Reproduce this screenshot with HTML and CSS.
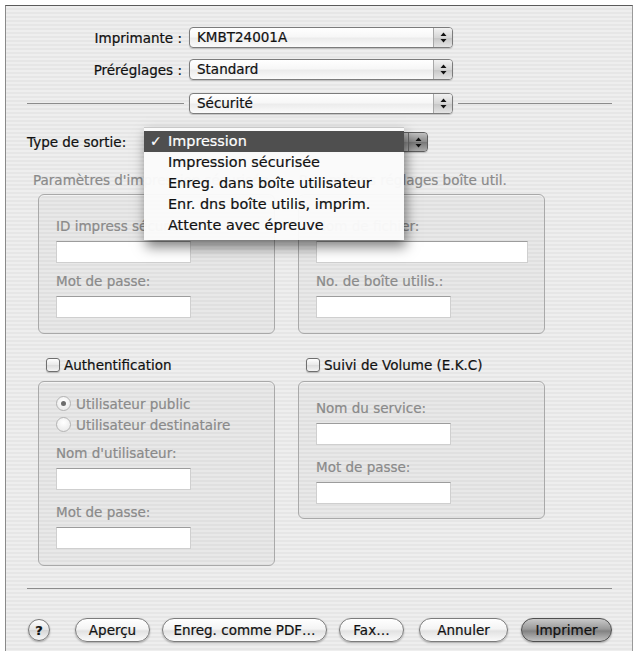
FILE: index.html
```html
<!DOCTYPE html>
<html lang="fr">
<head>
<meta charset="utf-8">
<title>Imprimer</title>
<link rel="stylesheet" href="styles.css">
</head>
<body>
<div class="window">
  <div class="form-row row-printer">
    <span class="row-label">Imprimante :</span>
    <div class="popup popup-main"><span class="popup-text">KMBT24001A</span><span class="popup-arrows"><svg width="7" height="11" viewBox="0 0 7 11"><path d="M3.5 0.5 L6.5 4 L0.5 4 Z M0.5 7 L6.5 7 L3.5 10.5 Z" fill="#111"/></svg></span></div>
  </div>
  <div class="form-row row-presets">
    <span class="row-label">Préréglages :</span>
    <div class="popup popup-main"><span class="popup-text">Standard</span><span class="popup-arrows"><svg width="7" height="11" viewBox="0 0 7 11"><path d="M3.5 0.5 L6.5 4 L0.5 4 Z M0.5 7 L6.5 7 L3.5 10.5 Z" fill="#111"/></svg></span></div>
  </div>
  <div class="pane-row">
    <span class="rule rule-left"></span>
    <div class="popup popup-main"><span class="popup-text">Sécurité</span><span class="popup-arrows"><svg width="7" height="11" viewBox="0 0 7 11"><path d="M3.5 0.5 L6.5 4 L0.5 4 Z M0.5 7 L6.5 7 L3.5 10.5 Z" fill="#111"/></svg></span></div>
    <span class="rule rule-right"></span>
  </div>

  <div class="type-row">
    <span class="type-label">Type de sortie:</span>
    <div class="popup popup-type"><span class="popup-text">Impression</span><span class="popup-arrows arrows-active"><svg width="7" height="11" viewBox="0 0 7 11"><path d="M3.5 0.5 L6.5 4 L0.5 4 Z M0.5 7 L6.5 7 L3.5 10.5 Z" fill="#111"/></svg></span></div>
    <ul class="menu">
      <li class="menu-item selected"><span class="check">✓</span>Impression</li>
      <li class="menu-item">Impression sécurisée</li>
      <li class="menu-item">Enreg. dans boîte utilisateur</li>
      <li class="menu-item">Enr. dns boîte utilis, imprim.</li>
      <li class="menu-item">Attente avec épreuve</li>
    </ul>
  </div>

  <div class="groups groups-top">
    <div class="group-col">
      <div class="group-title title-left">Paramètres d'impression sécurisée</div>
      <div class="group-box box-top">
        <div class="field-label first">ID impress sécurisée:</div>
        <div class="textfield tf-short"></div>
        <div class="field-label">Mot de passe:</div>
        <div class="textfield tf-short"></div>
      </div>
    </div>
    <div class="group-col">
      <div class="group-title title-right">Paramètres réglages boîte util.</div>
      <div class="group-box box-top">
        <div class="field-label first">Nom de fichier:</div>
        <div class="textfield tf-long"></div>
        <div class="field-label">No. de boîte utilis.:</div>
        <div class="textfield tf-short"></div>
      </div>
    </div>
  </div>

  <div class="groups groups-bottom">
    <div class="group-col">
      <label class="check-title"><span class="checkbox"></span>Authentification</label>
      <div class="group-box box-auth">
        <div class="radio-row"><span class="radio on"></span>Utilisateur public</div>
        <div class="radio-row"><span class="radio"></span>Utilisateur destinataire</div>
        <div class="field-label after-radio">Nom d'utilisateur:</div>
        <div class="textfield tf-short"></div>
        <div class="field-label">Mot de passe:</div>
        <div class="textfield tf-short"></div>
      </div>
    </div>
    <div class="group-col">
      <label class="check-title"><span class="checkbox"></span>Suivi de Volume (E.K.C)</label>
      <div class="group-box box-ekc">
        <div class="field-label first">Nom du service:</div>
        <div class="textfield tf-short"></div>
        <div class="field-label">Mot de passe:</div>
        <div class="textfield tf-short"></div>
      </div>
    </div>
  </div>

  <div class="separator"></div>

  <div class="button-row">
    <span class="help">?</span>
    <span class="btn btn-preview">Aperçu</span>
    <span class="btn btn-pdf">Enreg. comme PDF…</span>
    <span class="btn btn-fax">Fax…</span>
    <span class="btn btn-cancel">Annuler</span>
    <span class="btn btn-print">Imprimer</span>
  </div>
</div>
</body>
</html>
```
FILE: styles.css
```css
html, body {
  margin: 0;
  padding: 0;
  background: #ffffff;
}
body {
  font-family: "DejaVu Sans", "Liberation Sans", sans-serif;
  font-size: 13.5px;
  color: #111;
  -webkit-text-stroke: 0.2px currentColor;
}
.window {
  margin: 5px 0 0 5px;
  width: 626px;
  height: 646px;
  border-top: 1px solid #5a5a5a;
  border-left: 1px solid #8a8a8a;
  border-right: 1px solid #9a9a9a;
  background: repeating-linear-gradient(to bottom, #eeeeee 0 2px, #e6e6e6 2px 4px);
  box-sizing: content-box;
}

/* top rows */
.form-row {
  display: flex;
  align-items: center;
  height: 21px;
}
.row-printer { margin-top: 21px; }
.row-presets { margin-top: 11px; }
.row-label {
  width: 176px;
  margin-right: 7px;
  text-align: right;
  white-space: nowrap;
}
.popup {
  position: relative;
  box-sizing: border-box;
  height: 21px;
  border: 1px solid #7c7c7c;
  border-radius: 4px;
  background: linear-gradient(to bottom, #ffffff 0%, #f7f7f7 45%, #ececec 55%, #fbfbfb 100%);
  box-shadow: 0 1px 1px rgba(0,0,0,0.18);
  display: flex;
  align-items: center;
}
.popup-main { width: 264px; }
.popup-text {
  flex: 1;
  padding-left: 7px;
  white-space: nowrap;
  line-height: 19px;
}
.popup-arrows {
  width: 18px;
  height: 19px;
  border-left: 1px solid #a8a8a8;
  border-radius: 0 3px 3px 0;
  background: linear-gradient(to bottom, #f2f2f2 0%, #d6d6d6 50%, #c6c6c6 52%, #e4e4e4 100%);
  display: flex;
  align-items: center;
  justify-content: center;
}
.arrows-active {
  background: linear-gradient(to bottom, #c0c0c0 0%, #8a8a8a 50%, #787878 52%, #aaaaaa 100%);
  border-left-color: #6c6c6c;
}
.pane-row {
  display: flex;
  align-items: center;
  margin-top: 13px;
  padding: 0 20px 0 21px;
  height: 21px;
}
.rule {
  height: 1px;
  background: #8c8c8c;
}
.rule-left { width: 157px; flex: none; margin-right: 5px; }
.rule-right { flex: 1; margin-left: 5px; }

/* output type */
.type-row {
  position: relative;
  display: flex;
  align-items: center;
  margin-top: 18px;
  height: 20px;
}
.type-label {
  width: 120px;
  margin-left: 21px;
  white-space: nowrap;
}
.popup-type {
  width: 281px;
  height: 20px;
  border-color: #5e5e5e;
  background: linear-gradient(to bottom, #b8b8b8 0%, #9a9a9a 50%, #8a8a8a 52%, #b4b4b4 100%);
}
.popup-type .popup-arrows { height: 18px; }
.menu {
  position: absolute;
  left: 138px;
  top: -5px;
  width: 260px;
  margin: 0;
  padding: 3px 0 4px;
  list-style: none;
  background: rgba(250,250,250,0.97);
  border-top: 1px solid #c8c8c8;
  box-shadow: 2px 7px 12px rgba(0,0,0,0.5);
  font-size: 14.4px;
  z-index: 5;
}
.menu-item {
  height: 21px;
  line-height: 21px;
  padding-left: 24px;
  color: #111;
  white-space: nowrap;
  position: relative;
}
.menu-item.selected {
  background: #4f4f4f;
  color: #ffffff;
}
.check {
  position: absolute;
  left: 6px;
  top: 0;
  font-size: 14px;
}

/* groups */
.groups {
  display: grid;
  grid-template-columns: 237px 247px;
  column-gap: 23px;
  padding-left: 32px;
}
.groups-top { margin-top: 20px; }
.groups-bottom { margin-top: 23px; }
.group-title {
  height: 16px;
  line-height: 16px;
  color: #8a8a8a;
  white-space: nowrap;
  margin-left: -5px;
  margin-bottom: 6px;
}
.title-right { margin-left: 1px; }
.group-box {
  box-sizing: border-box;
  border: 1px solid #a9a9a9;
  border-radius: 6px;
  background: rgba(0,0,0,0.025);
  box-shadow: inset 0 1px 0 rgba(255,255,255,0.5);
  padding: 0 17px;
}
.box-top { height: 140px; padding-top: 23px; }
.box-auth { height: 185px; padding-top: 11px; }
.box-ekc { height: 138px; padding-top: 18px; }
.field-label {
  height: 16px;
  line-height: 16px;
  color: #8a8a8a;
  white-space: nowrap;
  margin-top: 10px;
}
.field-label.first { margin-top: 0; }
.box-auth .field-label { margin-top: 14px; }
.box-ekc .field-label { margin-top: 14px; }
.box-ekc .field-label.first { margin-top: 0; }
.box-auth .field-label.after-radio { margin-top: 10px; }
.textfield {
  box-sizing: border-box;
  height: 22px;
  margin-top: 7px;
  background: #ffffff;
  border: 1px solid #cfcfcf;
  border-top-color: #9c9c9c;
}
.tf-short { width: 135px; }
.tf-long { width: 212px; }

.check-title {
  display: flex;
  align-items: center;
  height: 16px;
  margin-left: 8px;
  margin-bottom: 8px;
  white-space: nowrap;
}
.checkbox {
  box-sizing: border-box;
  width: 14px;
  height: 14px;
  margin-right: 4px;
  border: 1px solid #6f6f6f;
  border-radius: 3px;
  background: linear-gradient(to bottom, #ffffff, #e8e8e8 50%, #dcdcdc 52%, #f4f4f4);
  box-shadow: 0 1px 1px rgba(0,0,0,0.2);
}
.radio-row {
  display: flex;
  align-items: center;
  height: 21px;
  color: #8a8a8a;
  white-space: nowrap;
}
.radio {
  box-sizing: border-box;
  width: 15px;
  height: 15px;
  margin-right: 5px;
  border: 1px solid #b3b3b3;
  border-radius: 50%;
  background: radial-gradient(circle at 50% 35%, #ffffff, #e6e6e6);
  display: flex;
  align-items: center;
  justify-content: center;
}
.radio.on::after {
  content: "";
  width: 5px;
  height: 5px;
  border-radius: 50%;
  background: #6c6c6c;
}

.separator {
  height: 1px;
  background: #8c8c8c;
  margin: 22px 20px 0 21px;
}

/* buttons */
.button-row {
  display: flex;
  align-items: center;
  margin-top: 28px;
  padding-left: 22px;
  height: 26px;
}
.help {
  box-sizing: border-box;
  width: 22px;
  height: 22px;
  border: 1px solid #7a7a7a;
  border-radius: 50%;
  background: linear-gradient(to bottom, #ffffff, #e4e4e4 50%, #d6d6d6 52%, #f6f6f6);
  box-shadow: 0 1px 2px rgba(0,0,0,0.3);
  display: flex;
  align-items: center;
  justify-content: center;
  font-weight: bold;
  font-size: 13px;
  margin-right: 25px;
}
.btn {
  box-sizing: border-box;
  height: 24px;
  border: 1px solid #7c7c7c;
  border-radius: 12px;
  background: linear-gradient(to bottom, #ffffff 0%, #f4f4f4 45%, #e2e2e2 55%, #fafafa 100%);
  box-shadow: 0 1px 2px rgba(0,0,0,0.3);
  display: flex;
  align-items: center;
  justify-content: center;
  white-space: nowrap;
  margin-right: 12px;
}
.btn-preview { width: 75px; }
.btn-pdf { width: 165px; }
.btn-fax { width: 65px; margin-right: 15px; }
.btn-cancel { width: 89px; margin-right: 13px; }
.btn-print {
  width: 91px;
  margin-right: 0;
  border-color: #4f4f4f;
  background: linear-gradient(to bottom, #c9c9c9 0%, #9a9a9a 45%, #828282 55%, #c2c2c2 100%);
}
```
